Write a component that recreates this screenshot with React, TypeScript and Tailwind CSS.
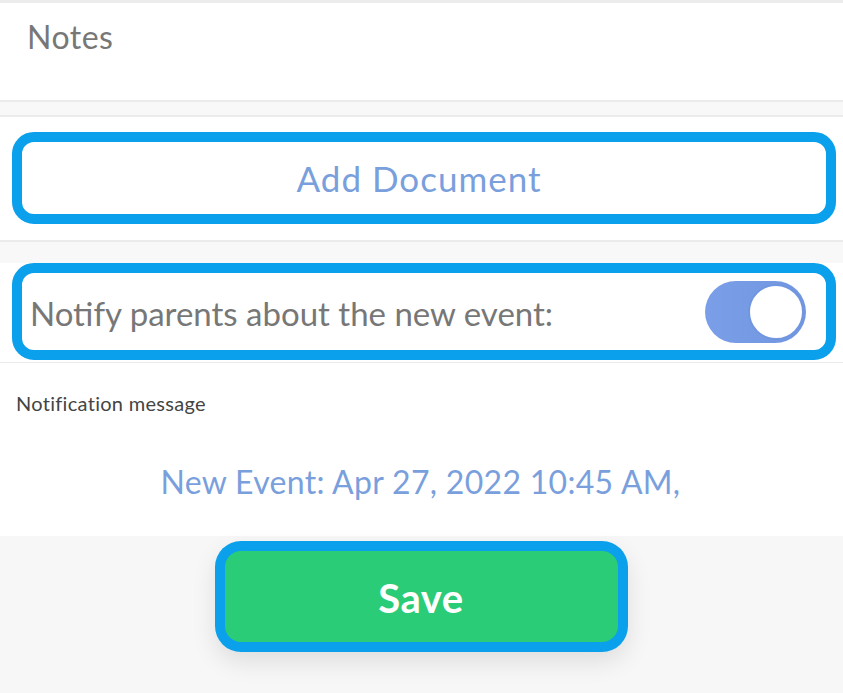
import React from "react";

export default function App() {
  return (
    <div className="w-[843px] h-[693px] flex flex-col bg-[#f7f7f7] font-['Lato','Open_Sans',sans-serif] overflow-hidden">
      <div className="h-[3px] bg-[#ececec]" />
      <div className="h-[97px] bg-white pl-[27px] pt-[15px]">
        <div className="text-[32px] leading-[38px] tracking-[0.5px] text-[#777777]">Notes</div>
      </div>
      <div className="h-[2px] bg-[#ebebeb]" />
      <div className="h-[13px] bg-[#f8f8f8]" />
      <div className="h-[2px] bg-[#ebebeb]" />
      <div className="bg-white pt-[15px] pb-[16px] pl-[12px] pr-[7px]">
        <div className="h-[92px] border-[10px] border-[#0aa0ec] rounded-[22px] bg-white flex items-center justify-center">
          <span className="text-[35px] leading-[40px] text-[#7a9fdd] tracking-[1px] ml-[-10px]">Add Document</span>
        </div>
      </div>
      <div className="h-[2px] bg-[#ebebeb]" />
      <div className="h-[21px] bg-[#f8f8f8]" />
      <div className="bg-white pl-[12px] pr-[7px]">
        <div className="h-[97px] border-[10px] border-[#0aa0ec] rounded-[22px] bg-white flex items-center justify-between pl-[8px] pr-[20px]">
          <span className="text-[33px] leading-[40px] text-[#777777] mt-[2px]">Notify parents about the new event:</span>
          <div className="w-[101px] h-[62px] rounded-full bg-gradient-to-r from-[#7a9fe8] to-[#7196e0] flex items-center justify-end pr-[2px]">
            <div className="w-[56px] h-[56px] rounded-full bg-white border-[2px] border-[#7196e0]" />
          </div>
        </div>
      </div>
      <div className="h-[2px] bg-white" />
      <div className="h-[1px] bg-[#ebebeb]" />
      <div className="h-[173px] bg-white flex flex-col">
        <div className="pl-[16px] pt-[28px] text-[20px] leading-[24px] tracking-[0.3px] text-[#444444]">Notification message</div>
        <div className="mt-[48px] text-center text-[32px] leading-[38px] tracking-[0.3px] text-[#7a9fdd] pr-[2px]">
          New Event: Apr 27, 2022 10:45 AM,
        </div>
      </div>
      <div className="flex justify-center pt-[5px]">
        <div className="ml-[-1px] w-[413px] h-[111px] rounded-[26px] bg-[#0aa0ec] p-[10px] shadow-[0_10px_24px_rgba(0,0,0,0.10)]">
          <div className="w-full h-full rounded-[16px] bg-[#2bcc78] flex items-center justify-center">
            <span className="text-[40px] font-bold tracking-[0.5px] text-white mt-[2px]">Save</span>
          </div>
        </div>
      </div>
    </div>
  );
}
